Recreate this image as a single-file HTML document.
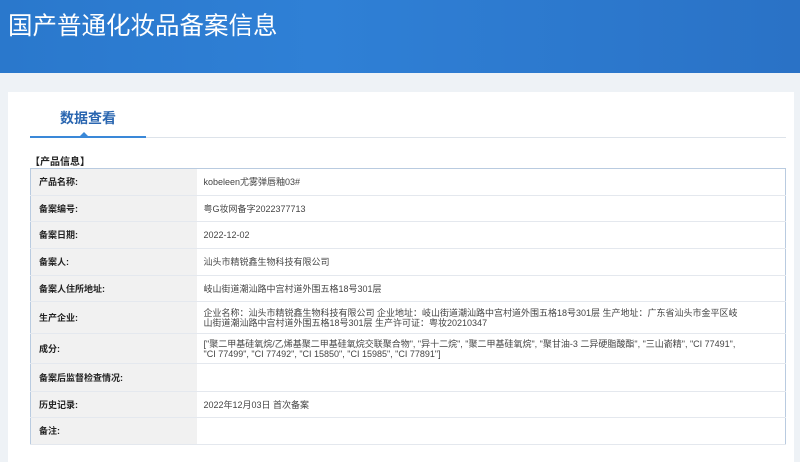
<!DOCTYPE html>
<html><head><meta charset="utf-8"><style>
*{margin:0;padding:0;box-sizing:border-box}
body{width:800px;height:457px;background:#eef2f6;font-family:"Liberation Sans","Noto Sans CJK SC",sans-serif;position:relative;overflow:hidden}
.hd{position:absolute;left:0;top:0;width:800px;height:73px;background:linear-gradient(90deg,#2a78cc,#2f80d6 40%,#2a72c6);}
.hd h1{position:absolute;left:8px;top:7px;font-size:24.5px;font-weight:normal;color:#fff;letter-spacing:0}
.panel{position:absolute;left:8px;top:92px;width:786px;height:370px;background:#fff}
.tab{position:absolute;left:60px;top:108px;font-size:14px;color:#2a66b0;font-weight:bold}
.line{position:absolute;left:30px;top:137px;width:756px;height:1px;background:#dde3ea}
.bl{position:absolute;left:30px;top:136px;width:116px;height:2px;background:#3a88d8}
.tri{position:absolute;left:79px;top:132px;width:0;height:0;border-left:5px solid transparent;border-right:5px solid transparent;border-bottom:5px solid #3a88d8}
.sec{position:absolute;left:30px;top:153px;font-size:10px;font-weight:bold;color:#222}
table{position:absolute;left:30px;top:168px;width:756px;border-collapse:collapse;border:1px solid #b9cbe0;font-size:9px}
td{border-bottom:1px solid #e4e8ee;padding:0 40px 0 7px;vertical-align:middle;color:#444;line-height:10px}
td.l{width:166px;background:#f1f1f1;font-weight:bold;color:#222;padding-left:8px;padding-right:7px}
</style></head><body>
<div class="hd"><h1>国产普通化妆品备案信息</h1></div>
<div class="panel"></div>
<div class="tab">数据查看</div>
<div class="line"></div><div class="bl"></div><div class="tri"></div>
<div class="sec">【产品信息】</div>
<table>
<tr style="height:27px"><td class="l">产品名称:</td><td>kobeleen尤雾弹唇釉03#</td></tr>
<tr style="height:26px"><td class="l">备案编号:</td><td>粤G妆网备字2022377713</td></tr>
<tr style="height:27px"><td class="l">备案日期:</td><td>2022-12-02</td></tr>
<tr style="height:27px"><td class="l">备案人:</td><td>汕头市精锐鑫生物科技有限公司</td></tr>
<tr style="height:26px"><td class="l">备案人住所地址:</td><td>岐山街道潮汕路中宫村道外围五格18号301层</td></tr>
<tr style="height:32px"><td class="l">生产企业:</td><td>企业名称：汕头市精锐鑫生物科技有限公司 企业地址：岐山街道潮汕路中宫村道外围五格18号301层 生产地址：广东省汕头市金平区岐山街道潮汕路中宫村道外围五格18号301层 生产许可证：粤妆20210347</td></tr>
<tr style="height:30px"><td class="l">成分:</td><td>["聚二甲基硅氧烷/乙烯基聚二甲基硅氧烷交联聚合物", "异十二烷", "聚二甲基硅氧烷", "聚甘油-3 二异硬脂酸酯", "三山嵛精", "CI 77491", "CI 77499", "CI 77492", "CI 15850", "CI 15985", "CI 77891"]</td></tr>
<tr style="height:28px"><td class="l">备案后监督检查情况:</td><td></td></tr>
<tr style="height:26px"><td class="l">历史记录:</td><td>2022年12月03日 首次备案</td></tr>
<tr style="height:27px"><td class="l">备注:</td><td></td></tr>
</table>
</body></html>
